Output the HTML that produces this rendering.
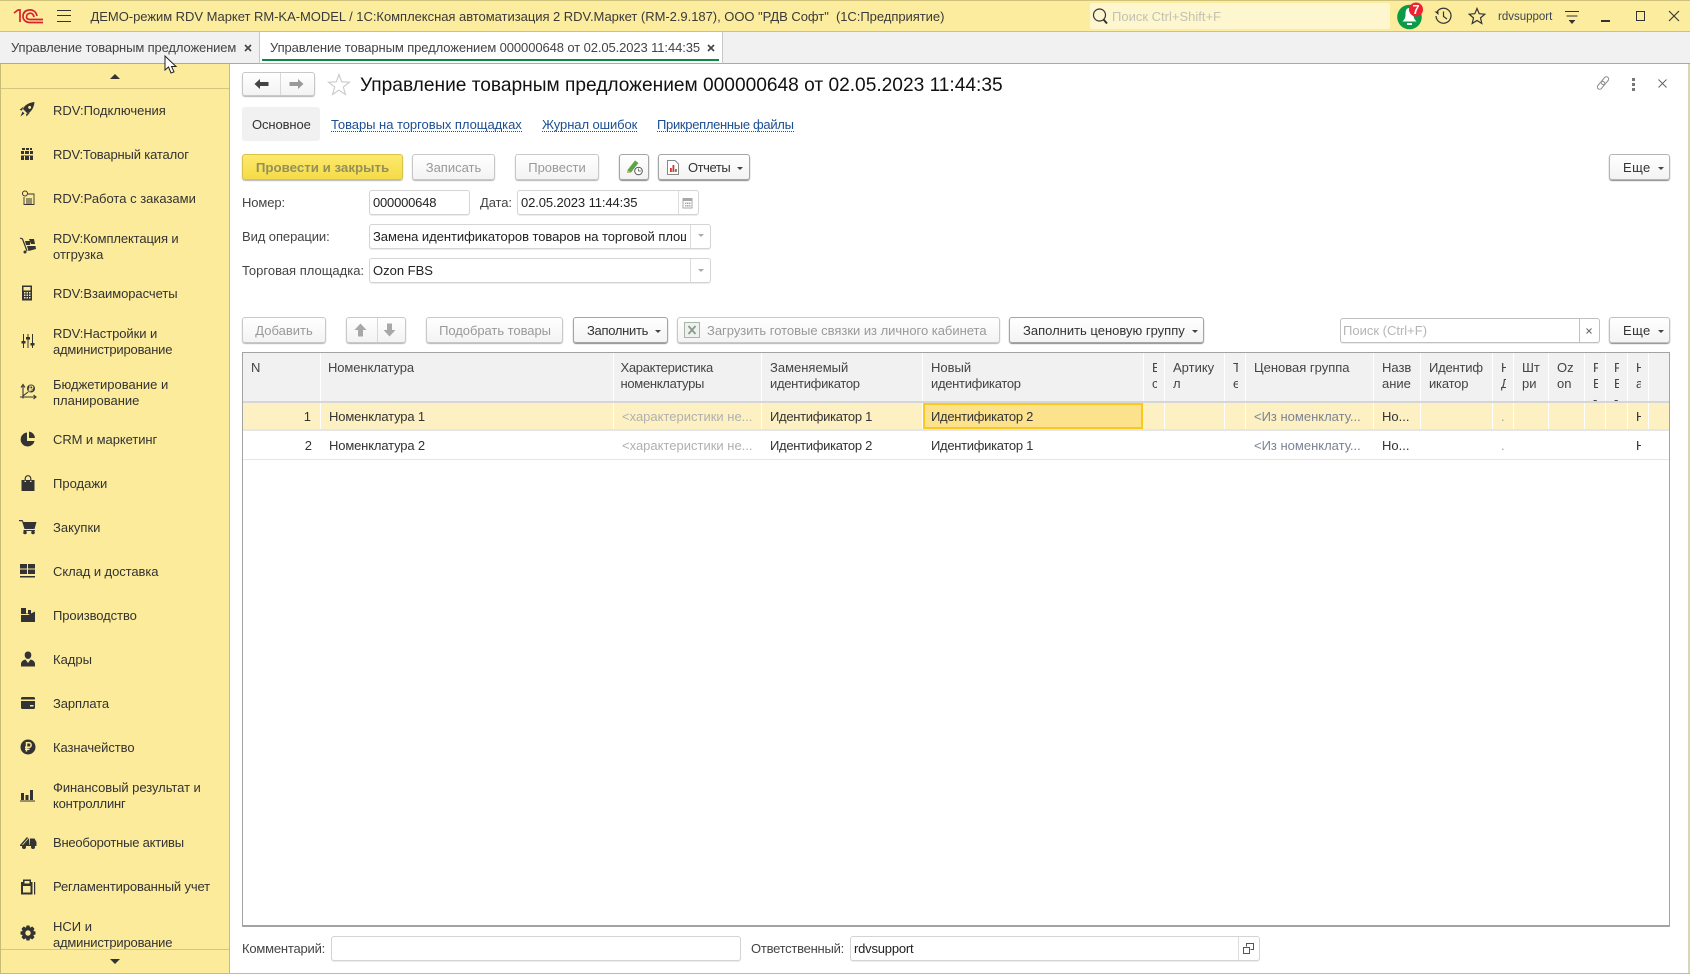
<!DOCTYPE html>
<html lang="ru"><head><meta charset="utf-8"><title>1С</title>
<style>
*{box-sizing:border-box}
html,body{margin:0;padding:0}
body{width:1690px;height:974px;position:relative;overflow:hidden;background:#fff;font:13px/16px "Liberation Sans",Arial,sans-serif;color:#333}
.a,.t,svg.i,.b,.f,.c{position:absolute}
.t{white-space:nowrap;height:16px}
.g{color:#a0a0a0}
.b{height:26px;padding-top:1px;border:1px solid #c8c8c8;border-radius:3px;background:linear-gradient(#fff,#f3f3f3);box-shadow:0 1px 1px #b5b5b5;text-align:center;line-height:24px;color:#999;white-space:nowrap}
.b.on{border-color:#a5a5a5;color:#333;box-shadow:0 1px 1px #8a8a8a}
.b.lf{text-align:left;padding-left:13px}
.ar{display:inline-block;width:0;height:0;border:3px solid transparent;border-top:3px solid #444;border-bottom:0;margin-left:7px;vertical-align:2px}
.f{height:25px;border:1px solid #d4d4d4;border-radius:3px;background:#fff;line-height:23px;padding-left:3px;white-space:nowrap;overflow:hidden;color:#222;box-shadow:0 1px 0 #ececec}
.d{position:absolute;top:0;bottom:0;width:1px;background:#dcdcdc}
.dn{position:absolute;width:0;height:0;border:3px solid transparent;border-top:3px solid #aaa;border-bottom:0}
.l{color:#1a4f92;border-bottom:1px dotted #1a4f92;height:15px}
.c{overflow:hidden;white-space:nowrap;padding-left:8px}
.h{top:353px;height:48px;background:#f1f1f1;border-right:1px solid #fff;padding-top:7px;color:#444;line-height:16px;white-space:pre;overflow:hidden}
.r1,.r2{border-right:1px solid #fff;line-height:16px;white-space:nowrap}
.r1{top:403px;height:26px;background:#fdf1c3;padding-top:6px}
.r2{top:431px;height:28px;padding-top:7px;border-right:0}
.ph{color:#b0b0b0}
.pg{color:#7b8494}
.r1.rt{text-align:right;padding:6px 9px 0 0}
.r2.rt{text-align:right;padding:7px 9px 0 0}
.nn{width:5px;overflow:hidden;white-space:pre}
.id{letter-spacing:-.3px}
.nm{letter-spacing:-.15px}
</style></head><body>

<!-- title bar -->
<div class="a" style="left:0;top:0;width:1690px;height:32px;background:#fbec9e;border-top:1px solid #cfc27c;border-bottom:1px solid #cfc27c"></div>
<svg class="i" style="left:13px;top:8px" width="32" height="17" viewBox="0 0 32 17"><g fill="none" stroke="#d8232a" stroke-width="1.7"><path d="M1 5 5 2H7V14"/><path d="M24 8C23 3 19 1.5 16 2 12 2.500 10 5 10 8.500S13 14.500 17 14.500H30"/><path d="M21 9C20.500 6 18.500 5 17 5.200 15 5.500 13.500 6.800 13.500 8.700S15 11.500 17.500 11.500H30"/></g></svg>
<div class="a" style="left:57px;top:10px;width:14px;height:12px;border-top:1px solid #333;border-bottom:1px solid #333"><div class="a" style="left:0;top:4px;width:14px;height:1px;background:#333"></div></div>
<div class="t" style="left:90.500px;top:9px;color:#3a3a3a;letter-spacing:-.035px">ДЕМО-режим RDV Маркет RM-KA-MODEL / 1С:Комплексная автоматизация 2 RDV.Маркет (RM-2.9.187), ООО "РДВ Софт"&nbsp;&nbsp;(1С:Предприятие)</div>
<div class="a" style="left:1090px;top:3px;width:300px;height:26px;background:#fdf6cf;border-radius:2px"></div>
<svg class="i" style="left:1092px;top:8px" width="17" height="17" viewBox="0 0 17 17"><circle cx="7.500" cy="7" r="6" fill="none" stroke="#333" stroke-width="1.200"/><path d="M11.500 11.500 15 15.500" stroke="#333" stroke-width="2"/></svg>
<div class="t" style="left:1112px;top:9px;color:#c2c2b0">Поиск Ctrl+Shift+F</div>
<svg class="i" style="left:1396px;top:2px" width="32" height="28" viewBox="0 0 32 28"><circle cx="13.500" cy="15" r="12.300" fill="#0a9a48"/><path d="M13.500 6C10 6 9.500 9 9.500 13 9.500 16 8 18 6.500 19.500H20.500C19 18 17.500 16 17.500 13 17.500 9 17 6 13.500 6Z" fill="#fff"/><rect x="11" y="21" width="5" height="2" fill="#fff"/><circle cx="20" cy="7.500" r="7" fill="#ee2230"/><text x="20" y="12" font-family="Liberation Sans" font-size="12.500" font-weight="bold" fill="#fff" text-anchor="middle">7</text></svg>
<svg class="i" style="left:1434px;top:7px" width="18" height="18" viewBox="0 0 18 18"><path d="M3 5A7.500 7.500 0 1 1 2 9" fill="none" stroke="#333" stroke-width="1.200"/><path d="M.5 4.500H4.500V8Z" fill="#333"/><path d="M9.500 4.500V9.500L13 12" fill="none" stroke="#333" stroke-width="1.200"/></svg>
<svg class="i" style="left:1468px;top:7px" width="18" height="18" viewBox="0 0 18 18"><path d="M9 1.500 11.200 6.700 16.800 7.200 12.500 10.900 13.800 16.500 9 13.500 4.200 16.500 5.500 10.900 1.200 7.200 6.800 6.700Z" fill="none" stroke="#333" stroke-width="1.200"/></svg>
<div class="t" style="left:1498px;top:9px;font-size:11.500px;color:#3f4552">rdvsupport</div>
<svg class="i" style="left:1564px;top:9px" width="16" height="16" viewBox="0 0 16 16"><path d="M1 2.500H15M2.500 7H13.500M5 11.500H11" stroke="#333" stroke-width="1.100"/><path d="M5.500 12H10.500L8 15Z" fill="#333"/></svg>
<div class="a" style="left:1601px;top:20px;width:9px;height:1.500px;background:#333"></div>
<div class="a" style="left:1636px;top:11px;width:9px;height:10px;border:1.500px solid #333"></div>
<svg class="i" style="left:1668px;top:10px" width="12" height="12" viewBox="0 0 12 12"><path d="M1 1 11 11M11 1 1 11" stroke="#333" stroke-width="1.100"/></svg>

<!-- tabs -->
<div class="a" style="left:0;top:32px;width:1690px;height:32px;background:#f1f1f1;border-bottom:1px solid #a9a9a9"></div>
<div class="a" style="left:259px;top:32px;width:464px;height:32px;background:#fff;border-left:1px solid #c8c8c8;border-right:1px solid #c8c8c8;border-bottom:1px solid #a9a9a9"></div>
<div class="a" style="left:262px;top:59px;width:457px;height:2px;background:#0a8a45"></div>
<div class="t" style="left:11px;top:40px;color:#444;letter-spacing:-.13px">Управление товарным предложением</div>
<svg class="i" style="left:244px;top:44px" width="8" height="8" viewBox="0 0 8 8"><path d="M1 1 7 7M7 1 1 7" stroke="#444" stroke-width="1.600"/></svg>
<div class="t" style="left:270px;top:40px;color:#444;letter-spacing:-.1px">Управление товарным предложением 000000648 от 02.05.2023 11:44:35</div>
<svg class="i" style="left:707px;top:44px" width="8" height="8" viewBox="0 0 8 8"><path d="M1 1 7 7M7 1 1 7" stroke="#444" stroke-width="1.600"/></svg>

<!-- sidebar -->
<div class="a" style="left:0;top:64px;width:230px;height:910px;background:#fbeb9b;border-left:1px solid #c9bd74;border-right:1px solid #c9bd74;border-bottom:1px solid #c9bd74"></div>
<div class="a" style="left:1px;top:88px;width:228px;height:1px;background:#d2c681"></div>
<div class="a" style="left:1px;top:949px;width:228px;height:1px;background:#d2c681"></div>
<div class="a" style="left:110px;top:74px;width:0;height:0;border:5px solid transparent;border-bottom:5px solid #333;border-top:0"></div>
<div class="a" style="left:110px;top:959px;width:0;height:0;border:5px solid transparent;border-top:5px solid #333;border-bottom:0"></div>

<div class="t" style="left:53px;top:103px">RDV:Подключения</div>
<div class="t" style="left:53px;top:147px;letter-spacing:-.16px">RDV:Товарный каталог</div>
<div class="t" style="left:53px;top:191px">RDV:Работа с заказами</div>
<div class="t" style="left:53px;top:231px;letter-spacing:-.12px">RDV:Комплектация и</div>
<div class="t" style="left:53px;top:247px">отгрузка</div>
<div class="t" style="left:53px;top:286px;letter-spacing:-.06px">RDV:Взаиморасчеты</div>
<div class="t" style="left:53px;top:326px;letter-spacing:-.07px">RDV:Настройки и</div>
<div class="t" style="left:53px;top:342px;letter-spacing:-.19px">администрирование</div>
<div class="t" style="left:53px;top:377px">Бюджетирование и</div>
<div class="t" style="left:53px;top:393px">планирование</div>
<div class="t" style="left:53px;top:432px;letter-spacing:-.07px">CRM и маркетинг</div>
<div class="t" style="left:53px;top:476px">Продажи</div>
<div class="t" style="left:53px;top:520px">Закупки</div>
<div class="t" style="left:53px;top:564px;letter-spacing:-.07px">Склад и доставка</div>
<div class="t" style="left:53px;top:608px;letter-spacing:-.08px">Производство</div>
<div class="t" style="left:53px;top:652px">Кадры</div>
<div class="t" style="left:53px;top:696px;letter-spacing:-.12px">Зарплата</div>
<div class="t" style="left:53px;top:740px;letter-spacing:-.08px">Казначейство</div>
<div class="t" style="left:53px;top:780px;letter-spacing:-.05px">Финансовый результат и</div>
<div class="t" style="left:53px;top:796px;letter-spacing:-.2px">контроллинг</div>
<div class="t" style="left:53px;top:835px;letter-spacing:-.22px">Внеоборотные активы</div>
<div class="t" style="left:53px;top:879px;letter-spacing:-.14px">Регламентированный учет</div>
<div class="t" style="left:53px;top:919px">НСИ и</div>
<div class="t" style="left:53px;top:935px;height:14px;overflow:hidden;letter-spacing:-.19px">администрирование</div>

<svg class="i" style="left:19px;top:101px" width="17" height="17" viewBox="0 0 17 17"><path fill="#333" fill-rule="evenodd" d="M15.500 1C10 1.500 5.500 4 4 8L8.500 12.500C12.500 11 15 6.500 15.500 1ZM10 5A1.500 1.500 0 1 0 12 7 1.500 1.500 0 0 0 10 5Z"/><path fill="#333" d="M4.500 5.500.5 9 3 9.500ZM11 11.500 7.500 15.500 7 13ZM3.500 10.500 5.500 12.500 1.500 15.500Z"/></svg>
<svg class="i" style="left:19px;top:146px" width="16" height="16" viewBox="0 0 16 16" fill="#333"><path d="M3 2H6V4H3ZM7 2H10V4H7ZM11 2H13V4H11ZM2 5H5V8H2ZM6 5H10V8H6ZM11 5H14V8H11ZM2 10H5V14H2ZM6 10H10V14H6ZM11 10H14V14H11ZM2 9H14V9.500H2Z"/></svg>
<svg class="i" style="left:20px;top:190px" width="16" height="16" viewBox="0 0 16 16" fill="none" stroke="#333"><circle cx="5" cy="3.500" r="2.500"/><path d="M4 7V14.500H14V4H8M6 9H12M6 11H12M6 13H12" stroke-width=".9"/></svg>
<svg class="i" style="left:19px;top:237px" width="18" height="17" viewBox="0 0 18 17" fill="#333"><path d="M1 1 3.500 2 8 14" fill="none" stroke="#333" stroke-width="1.200"/><circle cx="6" cy="15" r="1.500"/><path d="M6 4H11V8H7ZM10 2H15L16 7H12ZM8 9H16.500L17 12 9.500 14Z"/></svg>
<svg class="i" style="left:19px;top:285px" width="16" height="16" viewBox="0 0 16 16"><path fill="#333" fill-rule="evenodd" d="M3 .5H13V15.500H3ZM4.500 2V5.500H11.500V2ZM5 7V8.500H6.500V7ZM7.500 7V8.500H9V7ZM10 7V8.500H11.500V7ZM5 9.500V11H6.500V9.500ZM7.500 9.500V11H9V9.500ZM10 9.500V11H11.500V9.500ZM5 12V13.500H6.500V12ZM7.500 12V13.500H9V12ZM10 12V13.500H11.500V12Z"/></svg>
<svg class="i" style="left:20px;top:333px" width="16" height="16" viewBox="0 0 16 16" fill="#333"><path d="M3 1H4V15H3ZM7.500 1H8.500V15H7.500ZM12 1H13V15H12ZM1.500 8H5.500V10.500H1.500ZM6 4H10V6.500H6ZM10.500 10H14.500V12.500H10.500Z"/></svg>
<svg class="i" style="left:19px;top:383px" width="18" height="18" viewBox="0 0 18 18" fill="none" stroke="#333"><path d="M4 3V15.500M1 14H16M2 4.500 4 1.500 6 4.500M14.500 12 17 14 14.500 16M4 13 9 9" stroke-width="1.100"/><circle cx="12" cy="5.500" r="4" fill="#333" stroke="none"/><text x="12" y="8.500" font-family="Liberation Sans" font-size="8" font-weight="bold" fill="#fbeb9b" stroke="none" text-anchor="middle">₽</text></svg>
<svg class="i" style="left:20px;top:431px" width="16" height="16" viewBox="0 0 16 16" fill="#333"><path d="M7 1.500A7 7 0 1 0 14.500 10H7ZM9 .5V7H15A7 7 0 0 0 9 .5Z"/></svg>
<svg class="i" style="left:20px;top:475px" width="16" height="17" viewBox="0 0 16 17" fill="#333"><path d="M1.500 5H4.500V7H6V5H10V7H11.500V5H14.500V16H1.500Z"/><path d="M5.200 6V3.500A2.800 2.800 0 0 1 10.800 3.500V6" fill="none" stroke="#333" stroke-width="1.200"/></svg>
<svg class="i" style="left:19px;top:519px" width="18" height="16" viewBox="0 0 18 16" fill="#333"><path d="M0 1H3.500L4.500 3H17.500L15.500 10H5.500L3 2.200H0Z"/><circle cx="6" cy="13.500" r="1.800"/><circle cx="14" cy="13.500" r="1.800"/><path d="M4.500 11H16V12H4.500Z"/></svg>
<svg class="i" style="left:20px;top:563px" width="16" height="16" viewBox="0 0 16 16" fill="#333"><path d="M0 1H7V5.500H0ZM8 1H15V5.500H8ZM0 6.500H7V11H0ZM8 6.500H15V11H8ZM0 13H15V14.500H0Z"/></svg>
<svg class="i" style="left:20px;top:607px" width="16" height="16" viewBox="0 0 16 16" fill="#333"><path d="M1 1H6V6.500H8V3H11V7H1ZM1 8 8 8 15 4.500V15H1Z"/></svg>
<svg class="i" style="left:20px;top:651px" width="16" height="16" viewBox="0 0 16 16" fill="#333"><path d="M8 .5C10.200.5 11.300 2 11.300 4S10 8 8 8 4.700 6 4.700 4 5.800.5 8 .5ZM5.500 8.500 8 12 10.500 8.500C13 9 15 10.500 15 13V15.500H1V13C1 10.500 3 9 5.500 8.500Z"/></svg>
<svg class="i" style="left:20px;top:696px" width="16" height="14" viewBox="0 0 16 14" fill="#333"><path d="M1 2.500C1 1.500 1.500 1 2.500 1H13.500C14.500 1 15 1.500 15 2.500V3.500H1ZM1 5H15V11.500C15 12.500 14.500 13 13.500 13H2.500C1.500 13 1 12.500 1 11.500ZM10 9V10.500H13.500V9Z" fill-rule="evenodd"/></svg>
<svg class="i" style="left:20px;top:739px" width="16" height="16" viewBox="0 0 16 16"><circle cx="8" cy="8" r="7.500" fill="#333"/><path d="M6.500 12.500V3.800H9.300C11.700 3.800 11.700 8.300 9.300 8.300H5M5 10.300H9.500" fill="none" stroke="#fbeb9b" stroke-width="1.500"/></svg>
<svg class="i" style="left:20px;top:786px" width="16" height="16" viewBox="0 0 16 16" fill="#333"><path d="M1 7H4V14H1ZM5.500 9H8.500V14H5.500ZM10 4H13V14H10ZM0 14.500H15V15.500H0Z"/></svg>
<svg class="i" style="left:19px;top:834px" width="18" height="16" viewBox="0 0 18 16" fill="#333"><path d="M1 11 8 3 9 4 3 11ZM4 11 10 4 10.500 11ZM11 4.500H15.500L17.500 8V12H1V11H11Z"/><circle cx="5" cy="13" r="2"/><circle cx="14" cy="13" r="2"/></svg>
<svg class="i" style="left:20px;top:879px" width="16" height="16" viewBox="0 0 16 16" fill="#333"><path fill-rule="evenodd" d="M3 .5H11V3H12.500V15.500H1V3H3ZM4.500 2V4.500H9.500V2ZM3 7V13.500H10.500V7ZM14 3H15.200V15.500H14Z"/></svg>
<svg class="i" style="left:20px;top:925px" width="16" height="16" viewBox="0 0 16 16"><path fill="#333" fill-rule="evenodd" d="M6.500.5H9.500L10 2.700 12.300 1.500 14.500 3.700 13.300 6 15.500 6.500V9.500L13.300 10 14.500 12.300 12.300 14.500 10 13.300 9.500 15.500H6.500L6 13.300 3.700 14.500 1.500 12.300 2.700 10 .5 9.500V6.500L2.700 6 1.500 3.700 3.700 1.500 6 2.700ZM8 5.300A2.700 2.700 0 1 0 8 10.700 2.700 2.700 0 0 0 8 5.300Z"/></svg>

<!-- page head -->
<div class="b" style="left:242px;top:72px;width:73px;height:24px"><div class="d" style="left:37px;background:#d8d8d8"></div></div>
<svg class="i" style="left:254px;top:78px" width="15" height="12" viewBox="0 0 15 12"><path d="M.5 6 6 1V4H14.500V8H6V11Z" fill="#444"/></svg>
<svg class="i" style="left:289px;top:78px" width="15" height="12" viewBox="0 0 15 12"><path d="M14.500 6 9 1V4H.5V8H9V11Z" fill="#9a9a9a"/></svg>
<svg class="i" style="left:327px;top:73px" width="24" height="23" viewBox="0 0 24 23"><path d="M12 1.500 14.700 8.800 22.500 9.200 16.300 14 18.500 21.500 12 17.200 5.500 21.500 7.700 14 1.500 9.200 9.300 8.800Z" fill="none" stroke="#c9c9c9" stroke-width="1.100"/></svg>
<div class="t" style="left:360px;top:75px;font-size:19.150px;line-height:22px;height:22px;color:#111">Управление товарным предложением 000000648 от 02.05.2023 11:44:35</div>
<svg class="i" style="left:1595px;top:75px" width="16" height="16" viewBox="0 0 16 16" fill="none" stroke="#888" stroke-width="1"><g transform="rotate(-50 8 8)"><rect x=".5" y="5.700" width="9" height="4.600" rx="2.300"/><rect x="6.500" y="5.700" width="9" height="4.600" rx="2.300"/></g></svg>
<div class="a" style="left:1632px;top:78px;width:3px;height:3px;background:#777"></div>
<div class="a" style="left:1632px;top:83px;width:3px;height:3px;background:#777"></div>
<div class="a" style="left:1632px;top:88px;width:3px;height:3px;background:#777"></div>
<svg class="i" style="left:1658px;top:79px" width="9" height="9" viewBox="0 0 9 9"><path d="M.5 .5 8.500 8.500M8.500 .5 .5 8.500" stroke="#666" stroke-width="1"/></svg>

<!-- subtabs -->
<div class="a" style="left:242px;top:107px;width:78px;height:34px;background:#f1f1f1;border-radius:3px"></div>
<div class="t" style="left:252px;top:117px;letter-spacing:-.1px">Основное</div>
<div class="t l" style="left:331px;top:117px;letter-spacing:-.04px">Товары на торговых площадках</div>
<div class="t l" style="left:542px;top:117px;letter-spacing:-.08px">Журнал ошибок</div>
<div class="t l" style="left:657px;top:117px;letter-spacing:-.31px">Прикрепленные файлы</div>

<!-- command bar -->
<div class="b" style="left:242px;top:154px;width:161px;background:linear-gradient(#fde96d,#f6db47);border-color:#d9c24c;color:#94905c;font-weight:bold;font-size:13.300px">Провести и закрыть</div>
<div class="b" style="left:412px;top:154px;width:83px">Записать</div>
<div class="b" style="left:515px;top:154px;width:84px">Провести</div>
<div class="b on" style="left:619px;top:154px;width:30px"></div>
<svg class="i" style="left:626px;top:158px" width="17" height="18" viewBox="0 0 17 18"><path d="M1.500 12 9 2.500 12.500 5 5 14.500 1 15Z" fill="#5aa544"/><path d="M1.500 12 5 14.500 1 15Z" fill="#d9b36a"/><circle cx="12.500" cy="13" r="3.800" fill="#fff" stroke="#555"/><path d="M12.500 10.500V13H15" fill="none" stroke="#555" stroke-width=".8"/></svg>
<div class="b on" style="left:658px;top:154px;width:92px;text-align:left;padding-left:29px;letter-spacing:-.45px">Отчеты<span class="ar"></span></div>
<svg class="i" style="left:666px;top:160px" width="14" height="15" viewBox="0 0 14 15"><path d="M1.500 .5H9L12.500 4V14.500H1.500Z" fill="#fff" stroke="#888"/><rect x="4" y="8" width="1.800" height="4" fill="#d8322c"/><rect x="6.500" y="5" width="1.800" height="7" fill="#d8322c"/><rect x="9" y="9" width="1.800" height="3" fill="#3b9a45"/></svg>
<div class="b on lf" style="left:1609px;top:154px;width:61px;border-color:#b5b5b5;letter-spacing:.4px">Еще<span class="ar"></span></div>

<!-- fields -->
<div class="t" style="left:242px;top:195px;color:#444;letter-spacing:-.1px">Номер:</div>
<div class="f" style="left:369px;top:190px;width:101px;letter-spacing:-.2px">000000648</div>
<div class="t" style="left:480px;top:195px;color:#444;letter-spacing:-.1px">Дата:</div>
<div class="f" style="left:517px;top:190px;width:182px;letter-spacing:-.1px">02.05.2023 11:44:35<div class="d" style="left:160px"></div>
<svg class="a" style="left:164px;top:6px" width="11" height="12" viewBox="0 0 11 12"><path fill="#a8a8a8" fill-rule="evenodd" d="M.5 1H10.500V11.500H.5ZM1.500 4V10.500H9.500V4Z"/><path fill="#a8a8a8" d="M3 5.500H4.500V7H3ZM5 5.500H6.500V7H5ZM7 5.500H8.500V7H7ZM3 8H4.500V9.500H3ZM5 8H6.500V9.500H5ZM7 8H8.500V9.500H7Z"/></svg></div>
<div class="t" style="left:242px;top:229px;color:#444;letter-spacing:-.08px">Вид операции:</div>
<div class="f" style="left:369px;top:224px;width:342px;letter-spacing:-.05px"><div style="width:313px;overflow:hidden">Замена идентификаторов товаров на торговой площадке</div><div class="d" style="left:320px"></div><div class="dn" style="left:328px;top:9px"></div></div>
<div class="t" style="left:242px;top:263px;color:#444">Торговая площадка:</div>
<div class="f" style="left:369px;top:258px;width:342px">Ozon FBS<div class="d" style="left:320px"></div><div class="dn" style="left:328px;top:10px"></div></div>

<!-- table bar -->
<div class="b" style="left:242px;top:317px;width:84px">Добавить</div>
<div class="b" style="left:346px;top:317px;width:60px"><div class="d" style="left:30px;background:#d8d8d8"></div></div>
<svg class="i" style="left:354px;top:323px" width="13" height="14" viewBox="0 0 13 14"><path d="M6.500 .5 12.500 7H9V13.500H4V7H.5Z" fill="#a8a8a8"/></svg>
<svg class="i" style="left:383px;top:323px" width="13" height="14" viewBox="0 0 13 14"><path d="M6.500 13.500 12.500 7H9V.5H4V7H.5Z" fill="#a8a8a8"/></svg>
<div class="b" style="left:426px;top:317px;width:137px;letter-spacing:-.05px;padding-left:1px">Подобрать товары</div>
<div class="b on lf" style="left:573px;top:317px;width:95px;letter-spacing:-.3px">Заполнить<span class="ar"></span></div>
<div class="b" style="left:677px;top:317px;width:323px;text-align:left;padding-left:29px;letter-spacing:-.02px">Загрузить готовые связки из личного кабинета</div>
<svg class="i" style="left:684px;top:322px" width="16" height="16" viewBox="0 0 16 16"><rect x=".5" y=".5" width="15" height="15" fill="#eef2ee" stroke="#a8b4a8"/><path d="M4.500 4 11.500 12M11.500 4 4.500 12" stroke="#8a9a8a" stroke-width="1.800"/></svg>
<div class="b on lf" style="left:1009px;top:317px;width:195px">Заполнить ценовую группу<span class="ar"></span></div>
<div class="f" style="left:1340px;top:318px;width:260px;border-color:#c0c0c0;color:#b5b5b5;padding-left:2px">Поиск (Ctrl+F)<div class="d" style="left:238px;background:#c0c0c0"></div><svg class="a" style="left:245px;top:9px" width="6" height="6" viewBox="0 0 6 6"><path d="M.5 .5 5.500 5.500M5.500 .5 .5 5.500" stroke="#666"/></svg></div>
<div class="b on lf" style="left:1609px;top:317px;width:61px;border-color:#c0c0c0;letter-spacing:.4px">Еще<span class="ar"></span></div>

<!-- table -->
<div class="a" style="left:242px;top:352px;width:1428px;height:575px;border:1px solid #a3a3a3;border-bottom-width:2px"></div>
<div class="a" style="left:243px;top:401px;width:1426px;height:2px;background:#d6d6d6"></div>
<div class="a" style="left:243px;top:429px;width:1426px;height:2px;background:#e6e6e6"></div>
<div class="a" style="left:243px;top:459px;width:1426px;height:1px;background:#e6e6e6"></div>

<div class="c h" style="left:243px;width:78px;padding-left:8px">N</div>
<div class="c h" style="left:321px;width:293px;padding-left:7px;letter-spacing:-.1px">Номенклатура</div>
<div class="c h" style="left:614px;width:148px;padding-left:6.500px"><span class="id">Характеристика
номенклатуры</span></div>
<div class="c h" style="left:762px;width:161px">Заменяемый
<span class="id">идентификатор</span></div>
<div class="c h" style="left:923px;width:221px">Новый
<span class="id">идентификатор</span></div>
<div class="c h" style="left:1144px;width:21px"><div class="nn">Е
с</div></div>
<div class="c h" style="left:1165px;width:60px">Артику
л</div>
<div class="c h" style="left:1225px;width:21px"><div class="nn">Т
е</div></div>
<div class="c h" style="left:1246px;width:128px">Ценовая группа</div>
<div class="c h" style="left:1374px;width:47px">Назв
ание</div>
<div class="c h" style="left:1421px;width:72px;letter-spacing:-.2px">Идентиф
икатор</div>
<div class="c h" style="left:1493px;width:21px"><div class="nn">Н
Д</div></div>
<div class="c h" style="left:1514px;width:35px">Шт
ри</div>
<div class="c h" style="left:1549px;width:36px">Oz
on</div>
<div class="c h" style="left:1585px;width:21px"><div class="nn">F
Е
-</div></div>
<div class="c h" style="left:1606px;width:22px"><div class="nn">F
Е
-</div></div>
<div class="c h" style="left:1628px;width:21px"><div class="nn">Н
а</div></div>
<div class="c h" style="left:1649px;width:20px;border-right:0"></div>

<div class="c r1 rt" style="left:243px;width:78px">1</div>
<div class="c r1 nm" style="left:321px;width:293px">Номенклатура 1</div>
<div class="c r1 ph" style="left:614px;width:148px">&lt;характеристики не...</div>
<div class="c r1 id" style="left:762px;width:161px">Идентификатор 1</div>
<div class="c r1 id" style="left:923px;width:220px;background:#fde28e;border:2px solid #fac81e;padding:4px 0 0 6px">Идентификатор 2</div>
<div class="c r1" style="left:1143px;width:22px"></div>
<div class="c r1" style="left:1165px;width:60px"></div>
<div class="c r1" style="left:1225px;width:21px"></div>
<div class="c r1 pg" style="left:1246px;width:128px">&lt;Из номенклату...</div>
<div class="c r1" style="left:1374px;width:47px">Но...</div>
<div class="c r1" style="left:1421px;width:72px"></div>
<div class="c r1 g" style="left:1493px;width:21px">.</div>
<div class="c r1" style="left:1514px;width:35px"></div>
<div class="c r1" style="left:1549px;width:36px"></div>
<div class="c r1" style="left:1585px;width:21px"></div>
<div class="c r1" style="left:1606px;width:22px"></div>
<div class="c r1" style="left:1628px;width:21px"><div class="nn">Н</div></div>
<div class="c r1" style="left:1649px;width:20px;border-right:0"></div>

<div class="c r2 rt" style="left:243px;width:78px">2</div>
<div class="c r2 nm" style="left:321px;width:293px">Номенклатура 2</div>
<div class="c r2 ph" style="left:614px;width:148px">&lt;характеристики не...</div>
<div class="c r2 id" style="left:762px;width:161px">Идентификатор 2</div>
<div class="c r2 id" style="left:923px;width:221px">Идентификатор 1</div>
<div class="c r2 pg" style="left:1246px;width:128px">&lt;Из номенклату...</div>
<div class="c r2" style="left:1374px;width:47px">Но...</div>
<div class="c r2 g" style="left:1493px;width:21px">.</div>
<div class="c r2" style="left:1628px;width:21px"><div class="nn">Н</div></div>

<!-- footer -->
<div class="t" style="left:242px;top:941px;color:#444;letter-spacing:-.2px">Комментарий:</div>
<div class="f" style="left:331px;top:936px;width:410px"></div>
<div class="t" style="left:751px;top:941px;color:#444;letter-spacing:-.25px">Ответственный:</div>
<div class="f" style="left:850px;top:936px;width:410px;letter-spacing:-.2px">rdvsupport<div class="d" style="left:387px"></div>
<svg class="a" style="left:392px;top:6px" width="11" height="11" viewBox="0 0 11 11"><path d="M3.500 3.500V.5H10.500V6.500H7.500" fill="none" stroke="#555"/><rect x=".5" y="4.500" width="6" height="6" fill="none" stroke="#555"/></svg></div>

<div class="a" style="left:1688px;top:64px;width:2px;height:910px;background:#d8d8b8"></div>
<div class="a" style="left:230px;top:973px;width:1460px;height:1px;background:#c9bd74"></div>

<!-- cursor -->
<svg class="i" style="left:164px;top:55px" width="14" height="20" viewBox="0 0 14 20"><path d="M1 1V15L4.500 12 7 18 10 16.800 7.500 11.500H12Z" fill="#fff" stroke="#222" stroke-width="1"/></svg>
</body></html>
